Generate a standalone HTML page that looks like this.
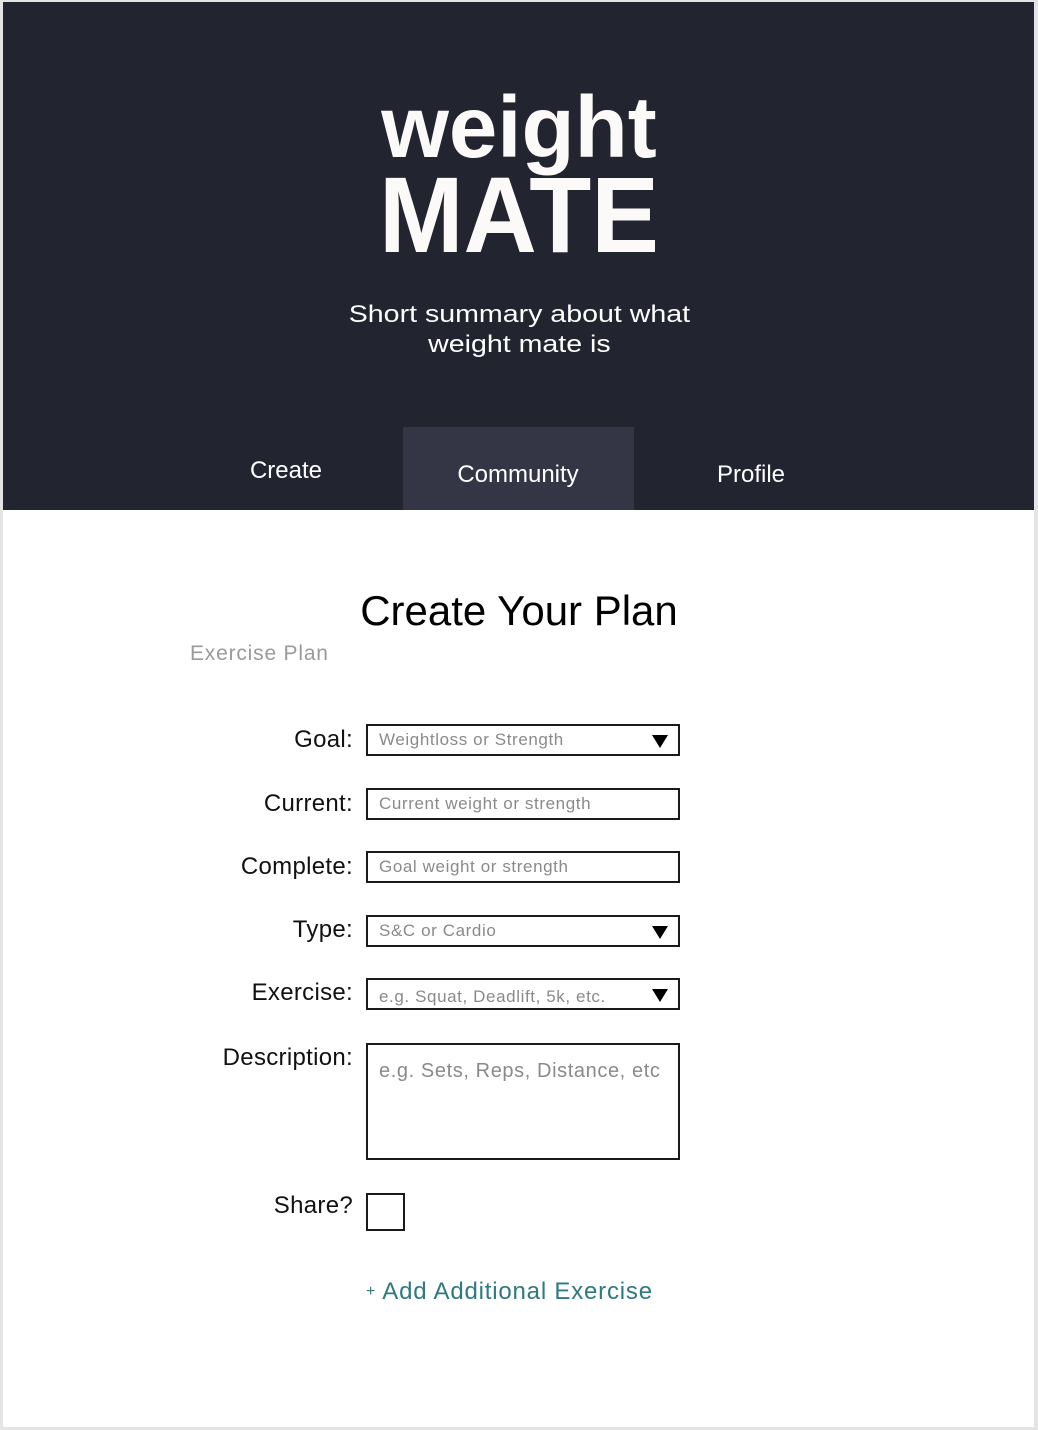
<!DOCTYPE html>
<html><head><meta charset="utf-8"><style>
*{margin:0;padding:0;box-sizing:border-box}
html,body{width:1038px;height:1430px;background:#e4e4e4;overflow:hidden;font-family:"Liberation Sans",sans-serif}
#page{position:absolute;left:3px;top:2px;width:1031px;height:1425px;background:#fff}
#hdr{position:absolute;left:3px;top:2px;width:1031px;height:508px;background:#222430}
.t{position:absolute;white-space:nowrap;line-height:1}
.tab{position:absolute;left:403px;top:427px;width:231px;height:83px;background:#343646}
.lbl{position:absolute;right:685px;font-size:24px;letter-spacing:0.3px;color:#111;line-height:1;white-space:nowrap}
.in{position:absolute;left:366px;width:314px;height:32px;border:2px solid #1a1a1a;background:#fff;color:#8a8a8a;font-size:17px;letter-spacing:0.6px;padding-left:11px;line-height:28px;white-space:nowrap}
.tri{position:absolute;right:10px;top:9px;width:0;height:0;border-left:8px solid transparent;border-right:8px solid transparent;border-top:13px solid #000}
</style></head><body>
<div id="page"></div>
<div id="hdr"></div>
<div class="tab"></div>
<div class="t" style="left:0;width:1038px;text-align:center;top:84px;font-size:87px;font-weight:bold;color:#fcfaf8">weight</div>
<div class="t" style="left:0;width:1038px;text-align:center;top:161px;font-size:108px;font-weight:bold;color:#fcfaf8"><span style="display:inline-block;transform:scaleX(0.94)">MATE</span></div>
<div class="t" style="left:0;width:1038px;text-align:center;top:300px;font-size:24px;color:#fff;line-height:30px"><span style="display:inline-block;transform:scaleX(1.19)">Short summary about what<br>weight mate is</span></div>
<div class="t" style="left:186px;width:200px;text-align:center;top:459px;font-size:24px;color:#fff">Create</div>
<div class="t" style="left:418px;width:200px;text-align:center;top:463px;font-size:24px;color:#fff">Community</div>
<div class="t" style="left:651px;width:200px;text-align:center;top:463px;font-size:24px;color:#fff">Profile</div>

<div class="t" style="left:0;width:1038px;text-align:center;top:590px;font-size:42px;color:#000">Create Your Plan</div>
<div class="t" style="left:190px;top:643px;font-size:21px;letter-spacing:0.8px;color:#9a9a9a">Exercise Plan</div>

<div class="lbl" style="top:728px">Goal:</div>
<div class="in" style="top:724px">Weightloss or Strength<div class="tri"></div></div>
<div class="lbl" style="top:792px">Current:</div>
<div class="in" style="top:788px">Current weight or strength</div>
<div class="lbl" style="top:855px">Complete:</div>
<div class="in" style="top:851px">Goal weight or strength</div>
<div class="lbl" style="top:918px">Type:</div>
<div class="in" style="top:915px">S&amp;C or Cardio<div class="tri"></div></div>
<div class="lbl" style="top:981px">Exercise:</div>
<div class="in" style="top:978px;line-height:34px">e.g. Squat, Deadlift, 5k, etc.<div class="tri"></div></div>
<div class="lbl" style="top:1046px">Description:</div>
<div class="in" style="top:1043px;height:117px;font-size:20px;line-height:20px;padding-top:16px">e.g. Sets, Reps, Distance, etc</div>
<div class="lbl" style="top:1194px">Share?</div>
<div class="in" style="top:1193px;width:39px;height:38px"></div>
<div class="t" style="left:366px;top:1280px;font-size:24px;letter-spacing:0.8px;color:#2e7a80"><span style="font-size:16px;vertical-align:3px">+</span> Add Additional Exercise</div>
</body></html>
